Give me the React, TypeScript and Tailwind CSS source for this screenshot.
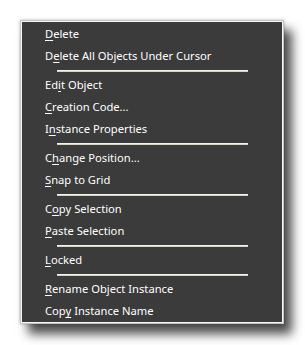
type Item = { label: string; key: number } | 'sep';

const items: Item[] = [
  { label: 'Delete', key: 0 },
  { label: 'Delete All Objects Under Cursor', key: 1 },
  'sep',
  { label: 'Edit Object', key: 2 },
  { label: 'Creation Code...', key: 0 },
  { label: 'Instance Properties', key: 1 },
  'sep',
  { label: 'Change Position...', key: 1 },
  { label: 'Snap to Grid', key: 0 },
  'sep',
  { label: 'Copy Selection', key: 1 },
  { label: 'Paste Selection', key: 0 },
  'sep',
  { label: 'Locked', key: 0 },
  'sep',
  { label: 'Rename Object Instance', key: 0 },
  { label: 'Copy Instance Name', key: 3 },
];

function MenuRow({ label, k }: { label: string; k: number }) {
  return (
    <div className="h-[22px] flex items-center pl-[23px] text-white text-[11.2px] leading-none whitespace-nowrap">
      <span>
        {label.slice(0, k)}
        <span className="underline underline-offset-2">{label[k]}</span>
        {label.slice(k + 1)}
      </span>
    </div>
  );
}

export default function App() {
  return (
    <div
      className="w-[305px] h-[345px] bg-white pl-[20px] pt-[20px]"
      style={{ fontFamily: '"Noto Sans", "Open Sans", sans-serif' }}
    >
      <div className="w-[264px] h-[304px] border border-[#c4c4c4] shadow-[8px_10px_10px_rgba(0,0,0,0.7),0_0_3px_rgba(0,0,0,0.25)]">
        <div className="h-full border border-[#f6f6f6] bg-[#3b3b3b] pt-px">
          {items.map((it, i) =>
            it === 'sep' ? (
              <div key={i} className="h-[7px] pt-[3px] pl-[35px] pr-[34px]">
                <div className="h-[2px] border-t border-[#f2f2f2] border-b-[#d6d2c2] border-b" />
              </div>
            ) : (
              <MenuRow key={i} label={it.label} k={it.key} />
            )
          )}
        </div>
      </div>
    </div>
  );
}
